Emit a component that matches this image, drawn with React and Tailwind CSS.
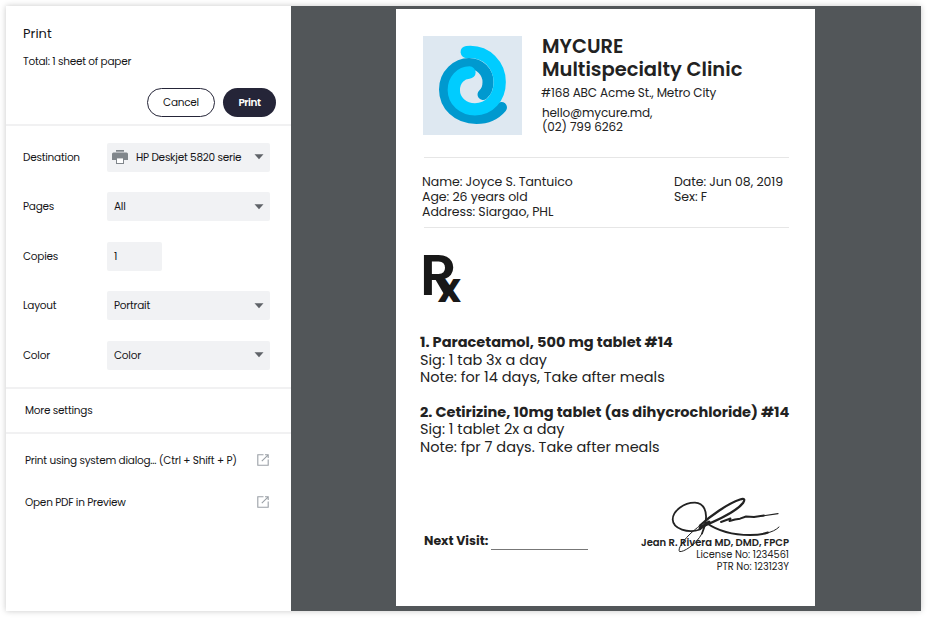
import React from "react";

function Caret() {
  return (
    <svg className="ml-auto block" width="10" height="6" viewBox="0 0 10 6">
      <path d="M0.5 0.3h9L5 5.3z" fill="#5f6368" />
    </svg>
  );
}

function Printer() {
  return (
    <svg className="mr-2 block" width="16" height="14" viewBox="0 0 16 14" fill="#80868b">
      <rect x="4" y="0" width="8" height="1.7" />
      <path d="M1.5 2.4h13A1.5 1.5 0 0 1 16 3.9V10H0V3.9A1.5 1.5 0 0 1 1.5 2.4z" />
      <rect x="4" y="7" width="8" height="7" />
      <rect x="5" y="8.4" width="6" height="4.6" fill="#fff" />
    </svg>
  );
}

function External() {
  return (
    <svg className="block" width="12" height="12" viewBox="0 0 12 12" fill="none" stroke="#9aa0a6" strokeWidth="1.1">
      <path d="M6.5 0.8H0.8v10.4h10.4V5.5" />
      <path d="M8 0.8h3.2V4M11.2 0.8L4.8 7.2" />
    </svg>
  );
}

function Row({ label, children }) {
  return (
    <div className="flex h-[29px] items-center">
      <span className="w-[84px] pt-px">{label}</span>
      {children}
    </div>
  );
}

function Select({ icon, children }) {
  return (
    <div className={`flex h-[29px] w-[163px] items-center rounded-xs bg-[#f1f2f4] pr-[6.5px] whitespace-nowrap ${icon ? "pl-[5px]" : "pl-[7px]"}`}>
      {icon}
      <span className="pt-px">{children}</span>
      <Caret />
    </div>
  );
}

function Sidebar() {
  return (
    <aside className="flex w-[285px] flex-col bg-white text-[10.5px] leading-4 tracking-[-0.24px] whitespace-nowrap text-[#151518]">
      <div className="h-[120px] border-b-2 border-[#f1f1f2] pt-[18px] pr-[15px] pl-[17px]">
        <h1 className="text-[13px] leading-5 tracking-normal">Print</h1>
        <p className="mt-[10px]">Total: 1 sheet of paper</p>
        <div className="mt-[18px] flex justify-end gap-2">
          <button className="h-[29px] w-[68px] rounded-full border border-[#252538] tracking-[-0.24px]">Cancel</button>
          <button className="h-[29px] w-[53px] rounded-full bg-[#252538] font-semibold tracking-[-0.5px] text-white">Print</button>
        </div>
      </div>
      <div className="flex h-[263px] flex-col gap-[20.5px] border-b-2 border-[#f1f1f2] pt-[16.55px] pl-[17px]">
        <Row label="Destination"><Select icon={<Printer />}>HP Deskjet 5820 serie</Select></Row>
        <Row label="Pages"><Select>All</Select></Row>
        <Row label="Copies"><div className="flex h-[29px] w-[55px] items-center rounded-xs bg-[#f1f2f4] pl-[7px]"><span className="pt-px">1</span></div></Row>
        <Row label="Layout"><Select>Portrait</Select></Row>
        <Row label="Color"><Select>Color</Select></Row>
      </div>
      <div className="flex h-[45px] items-center border-b-2 border-[#f1f1f2] pt-px pl-[19px]">More settings</div>
      <div className="flex flex-col gap-[26px] pt-[18px] pr-[22.5px] pl-[19px]">
        <div className="flex h-4 items-center justify-between"><span className="pt-[2px]">Print using system dialog... (Ctrl + Shift + P)</span><External /></div>
        <div className="flex h-4 items-center justify-between"><span className="pt-[2px]">Open PDF in Preview</span><External /></div>
      </div>
    </aside>
  );
}

function Logo() {
  return (
    <svg className="block bg-[#dee8f1]" width="99" height="99" viewBox="0 0 99 99" fill="none" strokeLinecap="round">
      <path stroke="#0099cf" strokeWidth="11" d="M78.5 71.5C73 78 64 82.5 53.5 82.5C34 82.5 21.5 69 21.5 53.5C21.5 38 34 27.5 46 27.5C57 27.5 65 36 65 46C65 51 63 56 60 58.5" />
      <path stroke="#00ccff" strokeWidth="12.3" d="M43.7 16C64 14 76.7 30 76.7 46C76.7 62 66 73.3 52 73.3C40 73.3 30.8 65 30.8 54C30.8 44 38 36.5 46.5 36.5" />
    </svg>
  );
}

function Signature() {
  return (
    <svg className="absolute -top-[42px] right-[3px]" width="120" height="62" viewBox="0 0 120 62" fill="none" stroke="#222" strokeLinecap="round" strokeLinejoin="round">
      <path strokeWidth="1.8" d="M34 34.5C22 38.5 7 34 6.7 24.5C6.7 16 18 7.5 29 7.7C38 8 41.5 17 39.5 27C38.8 31 37.5 35 36 38.5" />
      <path strokeWidth="1" d="M36 38.5C30 50 17 57.5 13.5 56.5C11.5 54 17 46 23 40C27 36 31 33 34 30.5" />
      <path strokeWidth="2.3" d="M34 30.5C44 21 62 8.5 74 4.5C79 3 79 5 77 8C70 17 50 26 34 32.5" />
      <path strokeWidth="3" d="M34 33.5L43 27" />
      <path strokeWidth="2" d="M40.5 28C52 36 68 40 84 40C92 40 98 39 102 37.5" />
      <path strokeWidth="1" d="M100 38.2C106 37 110 35 113 32" />
      <path strokeWidth="1.9" d="M55 27L64.5 23.5L63.5 26L69 24.5L74 23.7L80 21.5L88 22L98 20.5" />
      <path strokeWidth="1.2" d="M96 21L112 18.6" />
    </svg>
  );
}

function Page() {
  return (
    <main className="mt-[3px] ml-[105px] flex h-[597px] w-[419px] flex-col bg-white px-[27px] text-[#222]">
      <header className="mt-[27px] flex h-[99px]">
        <Logo />
        <div className="pl-5 text-[12px] leading-[14px] tracking-[-0.13px]">
          <h2 className="-mt-px text-[19.5px] leading-[23px] font-semibold tracking-normal">MYCURE<br />Multispecialty Clinic</h2>
          <p className="mt-[5px] -ml-px">#168 ABC Acme St., Metro City</p>
          <p className="mt-[6px]">hello@mycure.md,<br />(02) 799 6262</p>
        </div>
      </header>
      <section className="mt-[22px] ml-px flex h-[71px] w-[365px] justify-between border-y border-[#e6e6e6] pt-4 text-[12.5px] leading-[15px] tracking-[-0.05px]">
        <p className="-ml-[2px]">Name: Joyce S. Tantuico<br />Age: 26 years old<br />Address: Siargao, PHL</p>
        <p className="w-[115px]">Date: Jun 08, 2019<br />Sex: F</p>
      </section>
      <div className="mt-[16px] -ml-[3px] flex h-[60px] items-end font-semibold text-[#181818]">
        <span className="text-[57px] leading-[58px]">R</span>
        <span className="-ml-[19px] text-[40px] leading-[32px] font-bold">x</span>
      </div>
      <section className="mt-[30px] -ml-[3px] h-[199px] text-[14.5px] leading-[17.5px] whitespace-nowrap">
        <p className="font-bold">1. Paracetamol, 500 mg tablet #14</p>
        <p>Sig: 1 tab 3x a day</p>
        <p>Note: for 14 days, Take after meals</p>
        <p className="mt-[17.25px] font-bold">2. Cetirizine, 10mg tablet (as dihycrochloride) #14</p>
        <p>Sig: 1 tablet 2x a day</p>
        <p>Note: fpr 7 days. Take after meals</p>
      </section>
      <footer className="mr-[-1px] flex justify-between pl-px">
        <div className="flex h-[16px] items-center text-[12.5px] font-bold">Next Visit:<span className="ml-[3px] mt-[17px] h-px w-[97px] bg-[#777]" /></div>
        <div className="relative mt-1 text-right text-[9.8px] leading-3">
          <Signature />
          <p className="text-[10px] font-semibold">Jean R. Rivera MD, DMD, FPCP</p>
          <p>License No: 1234561</p>
          <p>PTR No: 123123Y</p>
        </div>
      </footer>
    </main>
  );
}

export default function App() {
  return (
    <div className="h-[618px] w-[928px] overflow-hidden bg-white p-[6px] font-['Poppins','Inter',sans-serif]">
      <div className="flex h-[605px] w-[915px] bg-[#525659] shadow-[0_0_6px_rgba(0,0,0,0.22)]">
        <Sidebar />
        <Page />
      </div>
    </div>
  );
}
